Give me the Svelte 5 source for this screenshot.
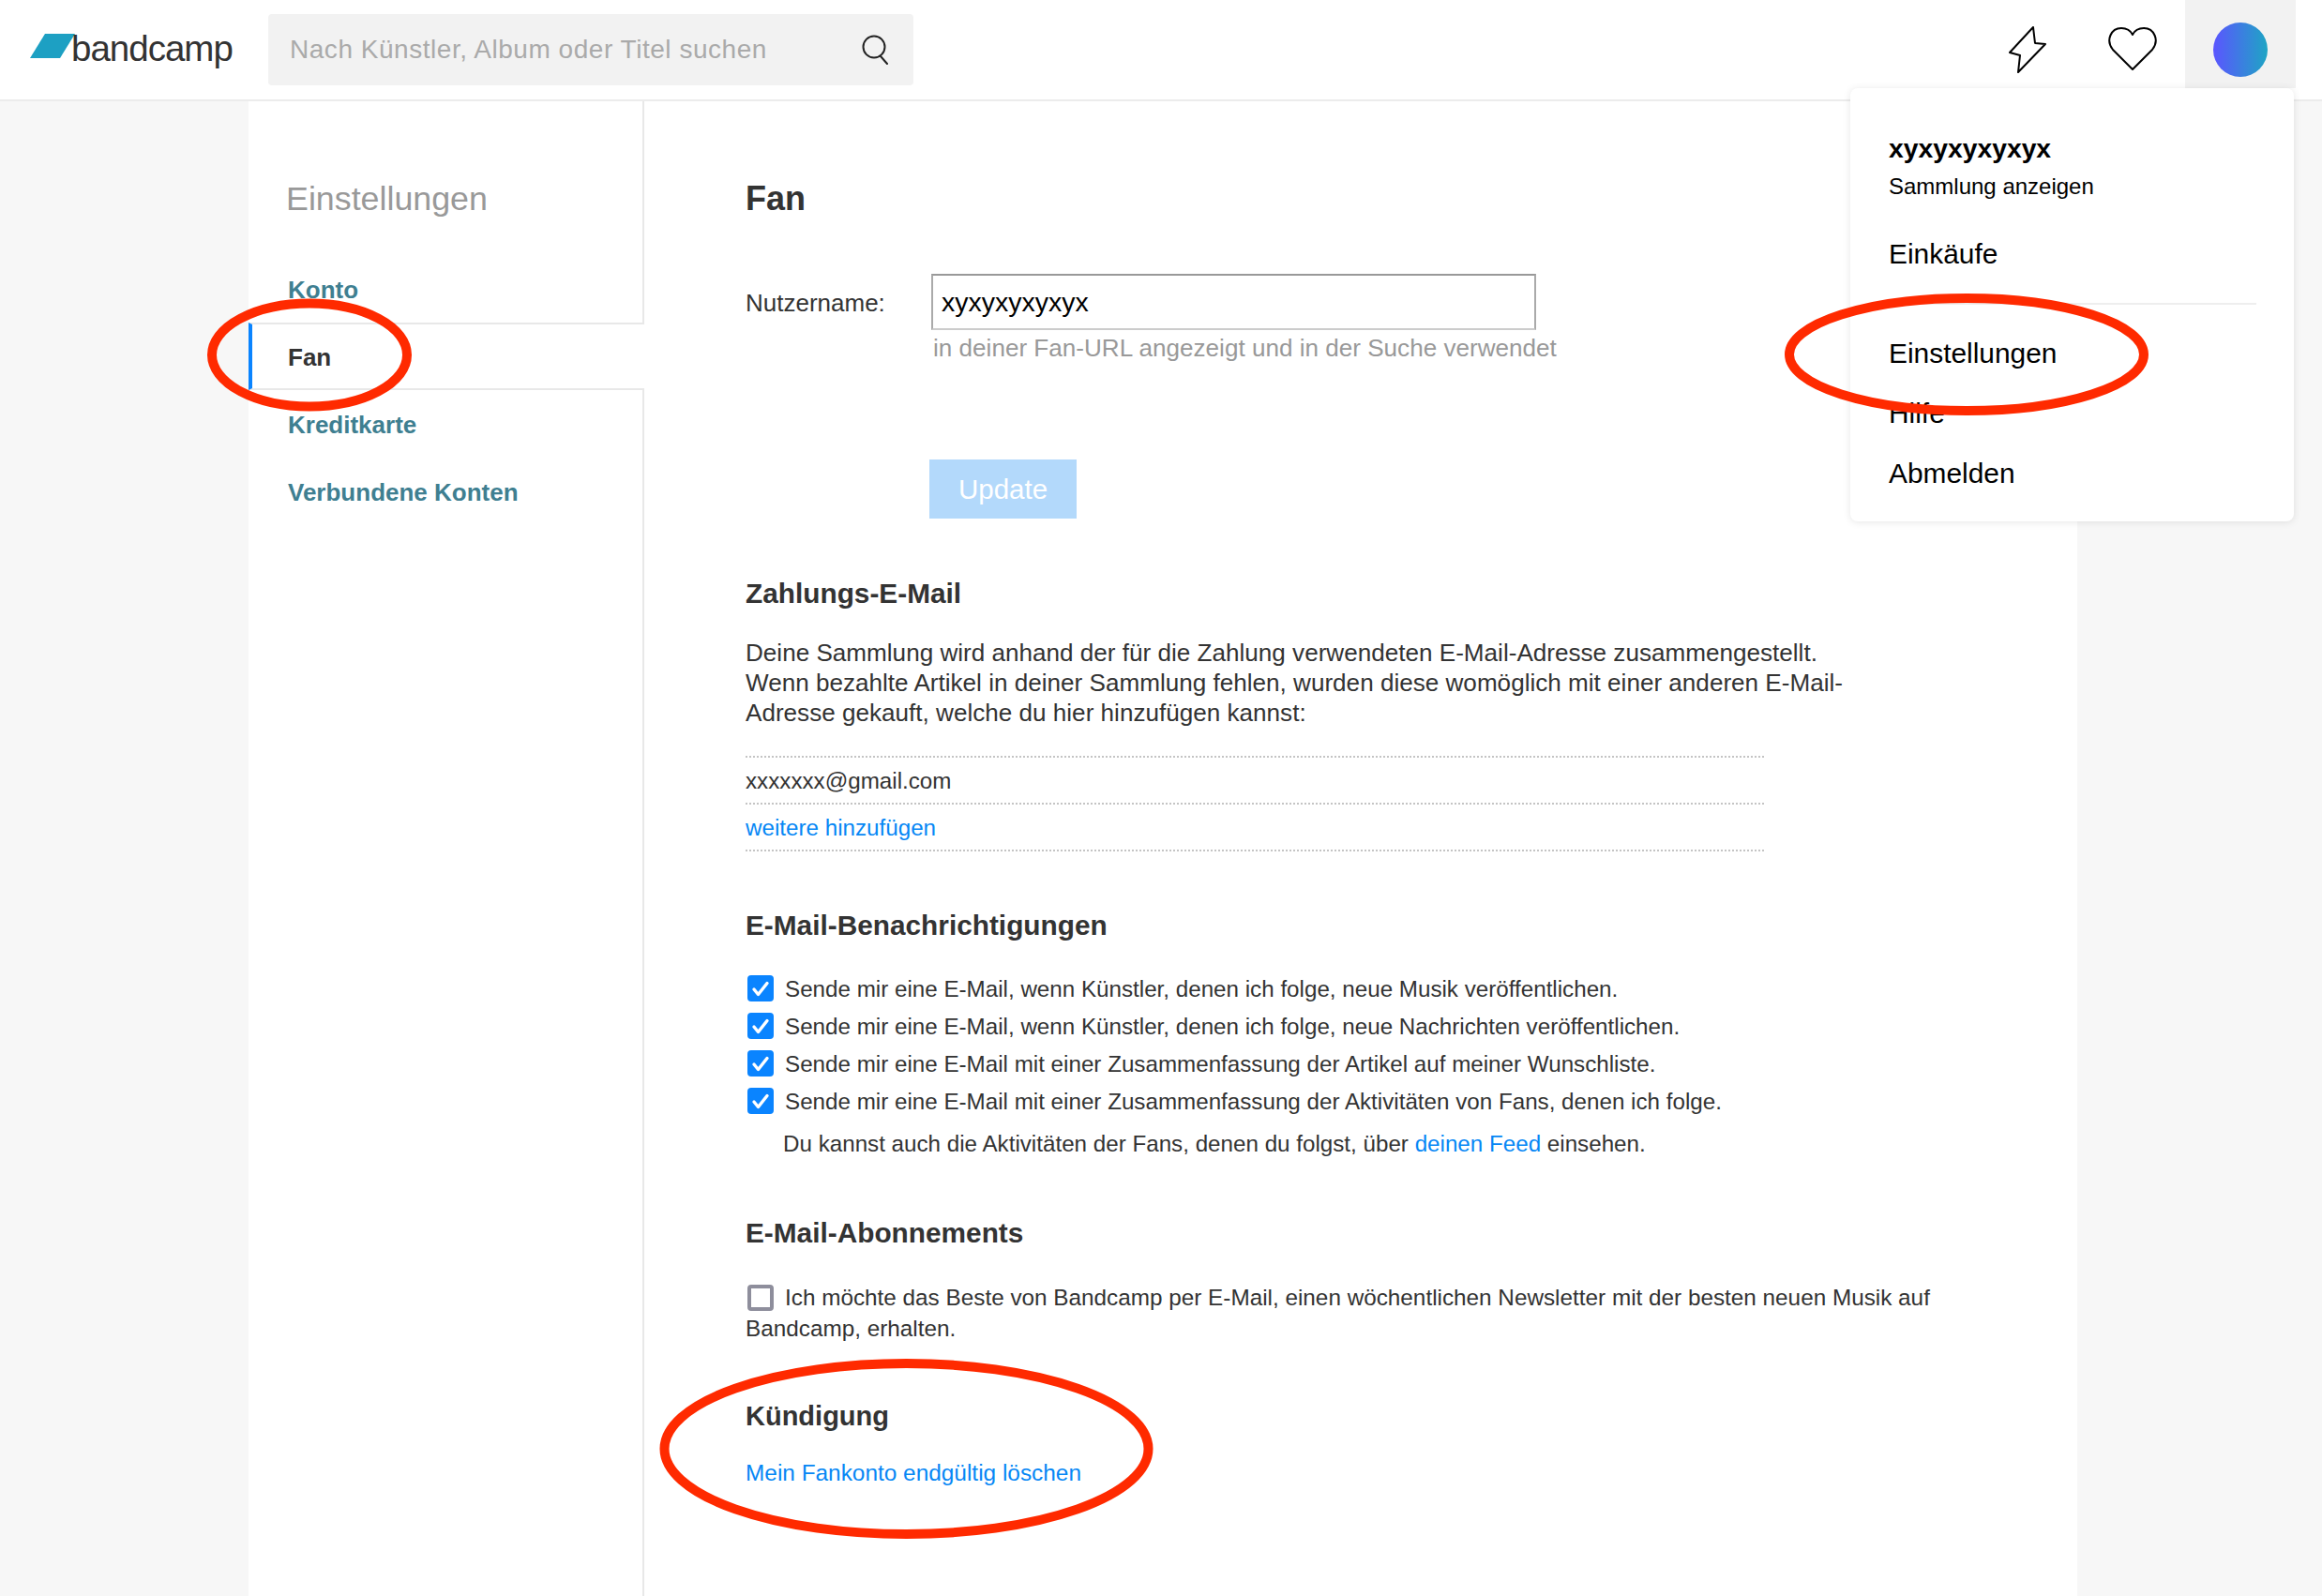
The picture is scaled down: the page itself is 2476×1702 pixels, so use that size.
<script>
  let username = $state('xyxyxyxyxyx');

  const navItems = ['Konto', 'Fan', 'Kreditkarte', 'Verbundene Konten'];
  const notifications = [
    'Sende mir eine E-Mail, wenn Künstler, denen ich folge, neue Musik veröffentlichen.',
    'Sende mir eine E-Mail, wenn Künstler, denen ich folge, neue Nachrichten veröffentlichen.',
    'Sende mir eine E-Mail mit einer Zusammenfassung der Artikel auf meiner Wunschliste.',
    'Sende mir eine E-Mail mit einer Zusammenfassung der Aktivitäten von Fans, denen ich folge.'
  ];
</script>

<header>
  <a class="logo" href="#top">
    <svg width="48" height="26" viewBox="0 0 48 26"><path d="M16 0H48L32 26H0Z" fill="#1da0c3" /></svg>
    <span>bandcamp</span>
  </a>
  <div class="search">
    <input type="text" placeholder="Nach Künstler, Album oder Titel suchen" />
    <svg width="30" height="32" viewBox="0 0 30 32" fill="none" stroke="#222" stroke-width="2">
      <circle cx="13" cy="13" r="11.5" />
      <path d="M20 23L27 31" stroke-linecap="round" />
    </svg>
  </div>
  <div class="tools">
    <svg class="bolt" width="40" height="50" viewBox="0 0 40 50" fill="none" stroke="#000" stroke-width="2" stroke-linejoin="round">
      <path d="M26 1L28 18L39 19L10 49L12 31L1 28Z" />
    </svg>
    <svg class="heart" width="52" height="48" viewBox="0 0 52 48" fill="none" stroke="#000" stroke-width="2" stroke-linejoin="round">
      <path d="M26 46L5 25C-3 15 3 2 14 2C20 2 24 5 26 9C28 5 32 2 38 2C49 2 55 15 47 25Z" />
    </svg>
    <div class="avatar-tile"><span class="avatar"></span></div>
  </div>
</header>

<div class="page">
  <nav>
    <h2>Einstellungen</h2>
    <ul>
      {#each navItems as item}
        <li class:active={item === 'Fan'}>{item}</li>
      {/each}
    </ul>
  </nav>

  <main>
    <h1>Fan</h1>

    <div class="field">
      <label for="username">Nutzername:</label>
      <div>
        <input id="username" type="text" bind:value={username} />
        <p class="hint">in deiner Fan-URL angezeigt und in der Suche verwendet</p>
      </div>
    </div>
    <button>Update</button>

    <h3 class="payment">Zahlungs-E-Mail</h3>
    <p class="intro">Deine Sammlung wird anhand der für die Zahlung verwendeten E-Mail-Adresse zusammengestellt. Wenn bezahlte Artikel in deiner Sammlung fehlen, wurden diese womöglich mit einer anderen E-Mail-Adresse gekauft, welche du hier hinzufügen kannst:</p>
    <div class="emails">
      <div>xxxxxxx@gmail.com</div>
      <div><a href="#top">weitere hinzufügen</a></div>
    </div>

    <h3 class="notify">E-Mail-Benachrichtigungen</h3>
    <div class="checks">
      {#each notifications as text}
        <div class="check-row">
          <span class="box on">
            <svg width="28" height="28" viewBox="0 0 28 28" fill="none" stroke="#fff" stroke-width="3.4" stroke-linecap="round" stroke-linejoin="round">
              <path d="M7 15L11.5 20.5L21 8.5" />
            </svg>
          </span>
          <span>{text}</span>
        </div>
      {/each}
    </div>
    <p class="note">Du kannst auch die Aktivitäten der Fans, denen du folgst, über <a href="#top">deinen Feed</a> einsehen.</p>

    <h3 class="subs">E-Mail-Abonnements</h3>
    <p class="newsletter"><span class="box"></span>Ich möchte das Beste von Bandcamp per E-Mail, einen wöchentlichen Newsletter mit der besten neuen Musik auf Bandcamp, erhalten.</p>

    <h3 class="cancel">Kündigung</h3>
    <p class="delete"><a href="#top">Mein Fankonto endgültig löschen</a></p>
  </main>
</div>

<div class="menu">
  <strong>xyxyxyxyxyx</strong>
  <span class="small">Sammlung anzeigen</span>
  <span class="big buy">Einkäufe</span>
  <hr />
  <div class="links">
    <span class="big">Einstellungen</span>
    <span class="big">Hilfe</span>
    <span class="big">Abmelden</span>
  </div>
</div>

<!-- red annotation marks drawn on top of the screenshot -->
<svg class="marks" width="2476" height="1702" viewBox="0 0 2476 1702" fill="none" stroke="#ff2a00" stroke-width="10">
  <ellipse cx="330" cy="378.5" rx="104" ry="55" />
  <ellipse cx="2097" cy="378" rx="189" ry="60" />
  <ellipse cx="966.5" cy="1545" rx="258" ry="91" />
</svg>

<style>
  :global(body) {
    margin: 0;
    background: #f7f7f7;
    font-family: "Liberation Sans", Arial, sans-serif;
    font-size: 24.2px;
    line-height: 32px;
    color: #333;
    min-height: 1702px;
    overflow: hidden;
  }

  a {
    color: #0687f5;
    text-decoration: none;
  }

  header {
    height: 106px;
    background: #fff;
    border-bottom: 2px solid #ececec;
    display: flex;
    align-items: flex-start;
    padding: 0 28px 0 32px;
  }

  .logo {
    width: 254px;
    flex: none;
    display: flex;
    margin-top: 36px;
    color: #333;
  }

  .logo span {
    font-size: 38.5px;
    letter-spacing: -1px;
    line-height: 26px;
    margin: 3px 0 0 -4px;
  }

  .search {
    width: 688px;
    height: 76px;
    margin-top: 15px;
    box-sizing: border-box;
    background: #f2f2f2;
    border-radius: 4px;
    display: flex;
    align-items: center;
    padding: 0 25px 0 23px;
  }

  .search input {
    flex: 1;
    border: none;
    outline: none;
    background: none;
    padding: 0;
    font: 28px "Liberation Sans", Arial, sans-serif;
    letter-spacing: 0.53px;
  }

  .search input::placeholder {
    color: #aaa;
    opacity: 1;
  }

  .tools {
    margin-left: auto;
    display: flex;
    align-items: flex-start;
  }

  .bolt {
    margin-top: 28px;
  }

  .heart {
    margin: 28px 30px 0 66px;
  }

  .avatar-tile {
    width: 118px;
    height: 94px;
    background: #f2f2f2;
    display: flex;
    justify-content: center;
    padding-top: 24px;
    box-sizing: border-box;
  }

  .avatar {
    width: 58px;
    height: 58px;
    border-radius: 50%;
    background: linear-gradient(90deg, #5b55ff, #1ea5c4);
  }

  .page {
    display: flex;
    width: 1950px;
    margin-left: 265px;
    min-height: 1594px;
    background: #fff;
  }

  nav {
    width: 422px;
    flex: none;
    box-sizing: border-box;
    border-right: 2px solid #e8e8e8;
    padding-top: 84px;
  }

  nav h2 {
    margin: 0 0 40px 40px;
    font-size: 35.8px;
    line-height: 40px;
    font-weight: normal;
    color: #999;
  }

  nav ul {
    list-style: none;
    margin: 0;
    padding: 0;
  }

  nav li {
    height: 72px;
    line-height: 74px;
    padding-left: 42px;
    font-size: 26px;
    font-weight: bold;
    color: #3f7f91;
  }

  nav li.active {
    position: relative;
    margin-right: -2px;
    padding-left: 38px;
    background: #fff;
    color: #333;
    border-left: 4px solid #0a84ff;
    border-top: 2px solid #e8e8e8;
    border-bottom: 2px solid #e8e8e8;
    box-sizing: border-box;
    line-height: 70px;
  }

  main {
    flex: 1;
    padding: 84px 150px 0 108px;
    min-width: 0;
  }

  h1 {
    margin: 0 0 60px;
    font-size: 36px;
    line-height: 40px;
  }

  h3 {
    font-size: 29.8px;
    line-height: 34px;
    margin: 0;
  }

  p {
    margin: 0;
  }

  .field {
    display: flex;
  }

  .field label {
    width: 198px;
    flex: none;
    padding-top: 15px;
    font-size: 26px;
  }

  .field input {
    display: block;
    width: 645px;
    height: 60px;
    box-sizing: border-box;
    border: 2px solid #aaa;
    border-top-color: #999;
    border-bottom-color: #ccc;
    padding: 1px 9px 0;
    outline: none;
    font: 28.5px "Liberation Sans", Arial, sans-serif;
    color: #000;
  }

  .hint {
    margin: 3px 0 0 2px;
    color: #999;
    white-space: nowrap;
    font-size: 26.1px;
  }

  button {
    display: block;
    margin: 103px 0 0 196px;
    width: 157px;
    height: 63px;
    border: none;
    padding: 0;
    background: #b3d9fb;
    color: #fff;
    font: 29.5px "Liberation Sans", Arial, sans-serif;
  }

  .payment {
    margin-top: 63px;
  }

  .intro {
    margin-top: 30px;
    max-width: 1190px;
    font-size: 26.1px;
  }

  .emails {
    width: 1086px;
    margin-top: 30px;
    border-bottom: 2px dotted #c4c4c4;
  }

  .emails div {
    border-top: 2px dotted #c4c4c4;
    height: 50px;
    line-height: 49px;
    box-sizing: border-box;
  }

  .notify {
    margin-top: 62px;
  }

  .checks {
    margin-top: 30px;
  }

  .check-row {
    display: flex;
    align-items: center;
    height: 40px;
    gap: 12px;
    padding-left: 2px;
  }

  .check-row span:last-child {
    padding-top: 1px;
  }

  .box {
    width: 28px;
    height: 28px;
    flex: none;
    box-sizing: border-box;
    border: 4px solid #8e8e9c;
    border-radius: 4px;
    display: inline-block;
    background: #fff;
  }

  .box.on {
    border: none;
    background: #0a84ff;
  }

  .box svg {
    display: block;
  }

  .note {
    margin-top: 10px;
    padding-left: 40px;
  }

  .subs {
    margin-top: 62px;
  }

  .newsletter {
    margin-top: 35px;
    line-height: 33px;
    font-size: 24.3px;
  }

  .newsletter .box {
    vertical-align: middle;
    margin: -6px 12px -2px 2px;
  }

  .cancel {
    margin-top: 60px;
    font-size: 29px;
  }

  .delete {
    margin-top: 28px;
    font-size: 24.4px;
  }

  .menu {
    position: absolute;
    left: 1973px;
    top: 94px;
    width: 473px;
    height: 462px;
    box-sizing: border-box;
    padding: 47px 40px 0 41px;
    background: #fff;
    border-radius: 8px;
    box-shadow: 0 1px 8px rgba(0, 0, 0, 0.1);
    display: flex;
    flex-direction: column;
    color: #000;
  }

  .menu strong {
    font-size: 28.3px;
    line-height: 34px;
  }

  .small {
    margin-top: 8px;
    font-size: 24px;
  }

  .big {
    font-size: 29.9px;
    line-height: 40px;
  }

  .buy {
    margin-top: 36px;
  }

  hr {
    width: 100%;
    margin: 32px 0 32px;
    border: none;
    border-top: 2px solid #eee;
  }

  .links {
    display: flex;
    flex-direction: column;
    gap: 24px;
  }

  .marks {
    position: absolute;
    left: 0;
    top: 0;
    pointer-events: none;
  }
</style>
